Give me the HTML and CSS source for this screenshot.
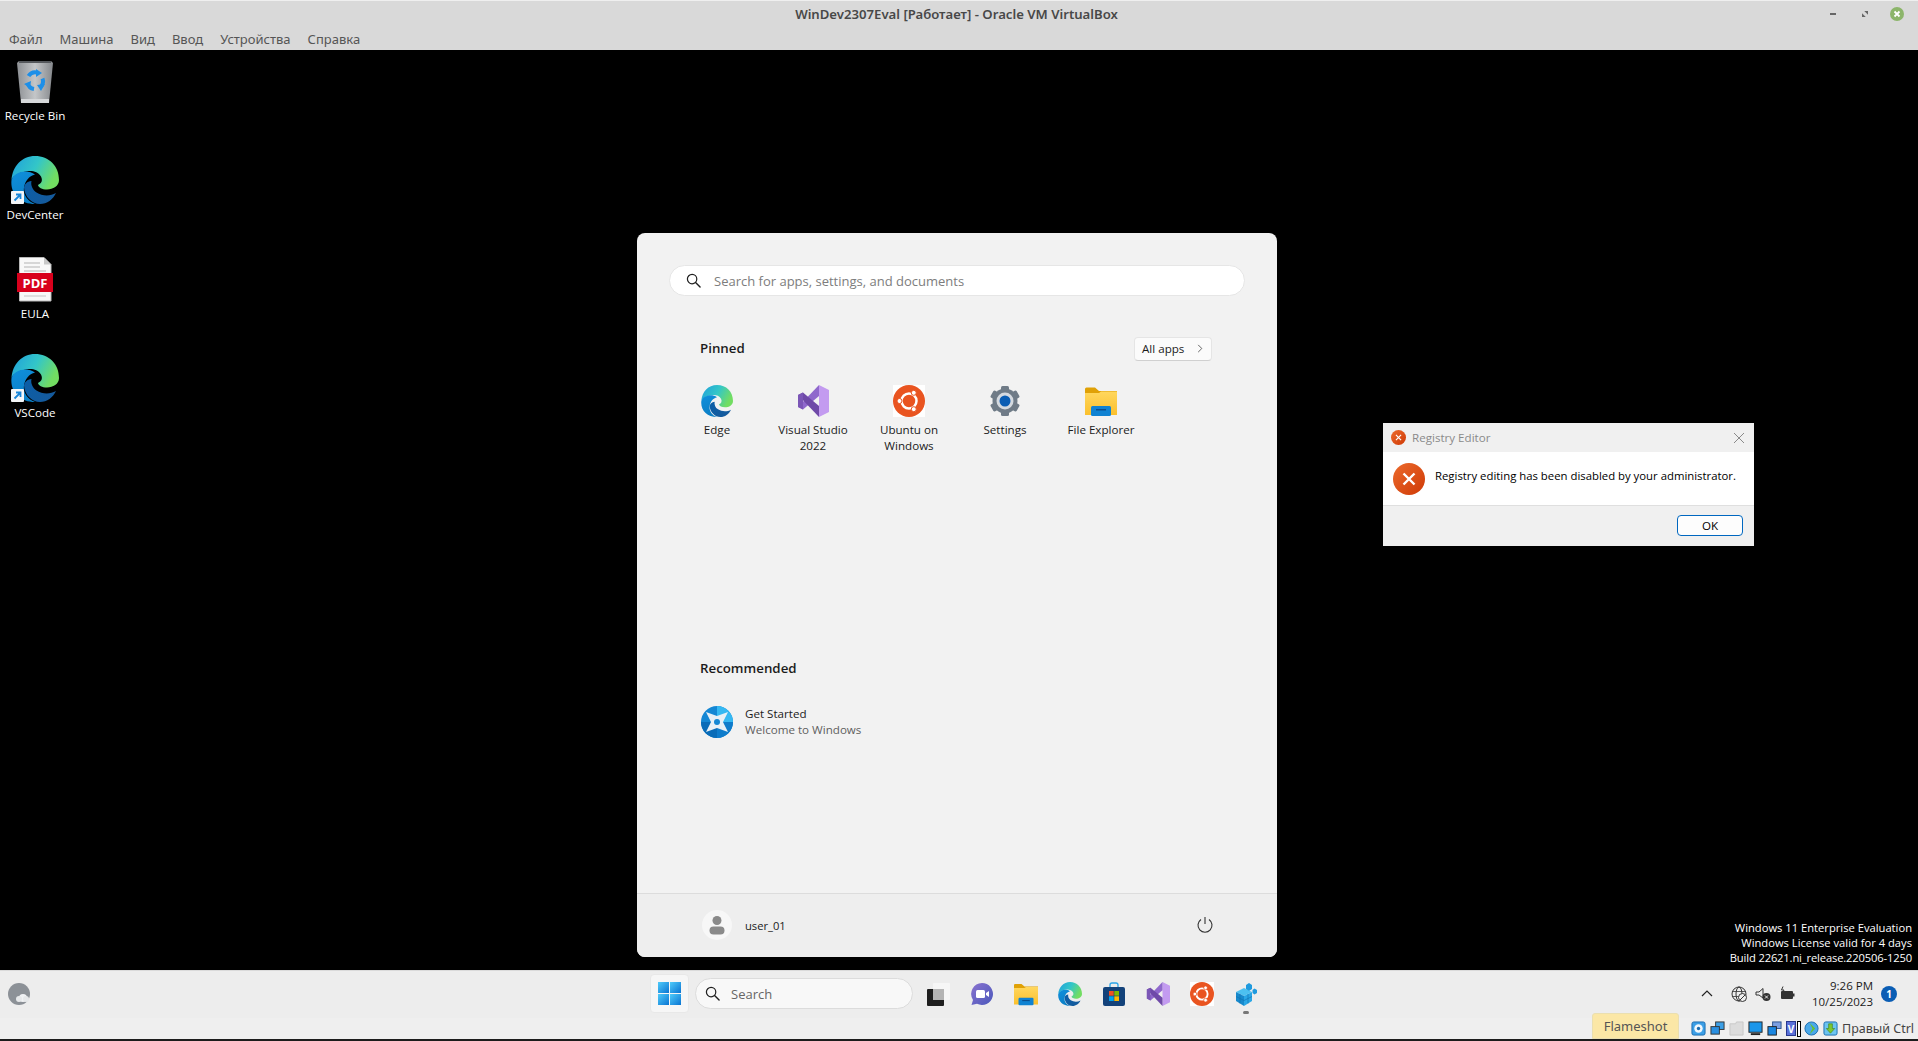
FILE: index.html
```html
<!DOCTYPE html>
<html lang="en">

<head>
    <meta charset="UTF-8">
    <meta name="viewport" content="width=device-width, initial-scale=1.0">
    <title>WinDev2307Eval - Oracle VM VirtualBox</title>
    <link rel="stylesheet" href="styles.css">
</head>

<body>
    <!-- shared icons -->
    <svg class="svgDefs" xmlns="http://www.w3.org/2000/svg">
        <defs>
            <linearGradient id="edgeTop" x1="0" y1="0" x2="1" y2="0.4">
                <stop offset="0" stop-color="#1f9fdc" />
                <stop offset="0.55" stop-color="#33c6c8" />
                <stop offset="1" stop-color="#72dd62" />
            </linearGradient>
            <linearGradient id="edgeLeft" x1="0" y1="0" x2="0.3" y2="1">
                <stop offset="0" stop-color="#0f8fdc" />
                <stop offset="1" stop-color="#0b7fc6" />
            </linearGradient>
            <linearGradient id="edgeHook" x1="0" y1="0" x2="1" y2="0.6">
                <stop offset="0" stop-color="#0a5ea8" />
                <stop offset="1" stop-color="#155a9c" />
            </linearGradient>
            <linearGradient id="binBody" x1="0" y1="0" x2="1" y2="0">
                <stop offset="0" stop-color="#8d9094" />
                <stop offset="0.5" stop-color="#c4c6c8" />
                <stop offset="1" stop-color="#85888c" />
            </linearGradient>
            <linearGradient id="winTile" x1="0" y1="0" x2="1" y2="1">
                <stop offset="0" stop-color="#4fcbfa" />
                <stop offset="1" stop-color="#0a74d2" />
            </linearGradient>
            <linearGradient id="errorRed" x1="0" y1="0" x2="1" y2="1">
                <stop offset="0" stop-color="#ec6a2c" />
                <stop offset="1" stop-color="#cf3a06" />
            </linearGradient>
            <linearGradient id="chatFill" x1="0" y1="0" x2="1" y2="1">
                <stop offset="0" stop-color="#8a72cf" />
                <stop offset="1" stop-color="#4a58bb" />
            </linearGradient>
            <linearGradient id="folderFill" x1="0" y1="0" x2="0" y2="1">
                <stop offset="0" stop-color="#ffd75e" />
                <stop offset="1" stop-color="#fbc02d" />
            </linearGradient>
            <symbol id="iconEdge" viewBox="0 0 48 48">
                <path fill="url(#edgeTop)" d="M0.5 24C1.5 10 11 0 24 0C38 0 48 10 48 24C48 30 42 33.5 36 33.5C31 33.5 27.5 31.5 27 29C30.5 27.5 32 24.5 30 20.5C27.5 16 22 14.5 17.500 15C9 16 2 19.500 0.5 24Z" />
                <path fill="url(#edgeLeft)" d="M0.5 24C-1 38 9 48 24 48C16 45 12 38.500 13 31.500C14 25 18 20 24 18.500C16 12.500 3 16 0.5 24Z" />
                <path fill="url(#edgeHook)" d="M13 31.500C13.500 41 21 48 29 48C36 48 42 43.500 45 37C39 40.500 31 40 25.500 36.500C21.500 34 19.500 29 20.500 25C16 25.500 13.500 28 13 31.500Z" />
            </symbol>
            <symbol id="iconShortcut" viewBox="0 0 13 13">
                <rect width="13" height="13" rx="1" fill="#f4f6f8" />
                <path d="M3.500 9.500L9 4M5 3.500H9.500V8" fill="none" stroke="#1a86d8" stroke-width="1.800" />
            </symbol>
            <symbol id="iconVs" viewBox="0 0 32 32">
                <polygon points="22,0 32,5 32,27 22,32" fill="#c39bf0" />
                <polygon points="22,0 22,11 6,24.500 1,22" fill="#8f68cc" />
                <polygon points="1,10 6,7.500 22,21 22,32" fill="#6f4aa8" />
                <polygon points="1,10 6,7.500 6,24.500 1,22" fill="#7b56b6" />
            </symbol>
            <symbol id="iconUbuntu" viewBox="0 0 32 32">
                <rect width="32" height="32" fill="#fff" />
                <circle cx="16" cy="16" r="16" fill="#e95420" />
                <circle cx="16" cy="16" r="7.500" fill="none" stroke="#fff" stroke-width="2.500" />
                <circle cx="6.500" cy="16" r="2.500" fill="#fff" stroke="#e95420" />
                <circle cx="20.750" cy="7.800" r="2.500" fill="#fff" stroke="#e95420" />
                <circle cx="20.750" cy="24.200" r="2.500" fill="#fff" stroke="#e95420" />
            </symbol>
            <symbol id="iconFolder" viewBox="0 0 32 32">
                <path fill="#e0a106" d="M0 4a1.500 1.500 0 0 1 1.500-1.500H10L14 6H32V12H0Z" />
                <path fill="url(#folderFill)" d="M0 8H14L16 6.500H32V30H0Z" />
                <rect x="6" y="21" width="20" height="10" rx="1.500" fill="#0f82d2" />
                <rect x="11" y="24" width="10" height="1.500" fill="#0a4f8f" />
            </symbol>
            <symbol id="iconSearch" viewBox="0 0 16 16">
                <circle cx="6.500" cy="6.500" r="5" fill="none" stroke="#1f1f1f" stroke-width="1.300" />
                <path d="M10.200 10.200L15 15" stroke="#1f1f1f" stroke-width="1.500" stroke-linecap="round" />
            </symbol>
            <symbol id="errorMark" viewBox="0 0 32 32">
                <circle cx="16" cy="16" r="16" fill="url(#errorRed)" />
                <path d="M10.500 10.500L21.500 21.500M21.500 10.500L10.500 21.500" stroke="#fff" stroke-width="2.400" />
            </symbol>
        </defs>
    </svg>

    <!-- VirtualBox window title and menu -->
    <header class="vmHeader">
        <div class="titleRow">
            <span class="vmTitle">WinDev2307Eval [Работает] - Oracle VM VirtualBox</span>
            <div class="windowButtons">
                <span class="btnMin"></span>
                <svg class="btnRestore" viewBox="0 0 8 8">
                    <polygon points="0,8 0,3 5,8" fill="#666" />
                    <polygon points="8,0 8,5 3,0" fill="#666" />
                </svg>
                <svg class="btnClose" viewBox="0 0 14 14">
                    <circle cx="7" cy="7" r="7" fill="#8cb56a" />
                    <path d="M4.500 4.500L9.500 9.500M9.500 4.500L4.500 9.500" stroke="#fff" stroke-width="1.800" />
                </svg>
            </div>
        </div>
        <nav class="menuRow">
            <span>Файл</span>
            <span>Машина</span>
            <span>Вид</span>
            <span>Ввод</span>
            <span>Устройства</span>
            <span>Справка</span>
        </nav>
    </header>

    <main class="desktop">
        <div class="desktopIcons">
            <div class="deskIcon">
                <svg class="deskGlyph" viewBox="0 0 48 48">
                    <polygon points="6,6 8,4 40,4 42,6 38,46 10,46" fill="url(#binBody)" />
                    <rect x="8" y="4" width="32" height="2" fill="#55585c" />
                    <rect x="10" y="42" width="28" height="4" fill="#d6d8da" />
                    <g fill="none" stroke="#1d8fe8" stroke-width="4">
                        <path d="M17.500 19A8 8 0 0 1 26 15.500" />
                        <path d="M31.500 21.500A8 8 0 0 1 29.500 30" />
                        <path d="M23 32A8 8 0 0 1 16.500 26" />
                    </g>
                    <g fill="#1d8fe8">
                        <polygon points="25,12 31,16 25,20" />
                        <polygon points="34,27 30,34 26,28" />
                        <polygon points="13,27 20,24 19,31" />
                    </g>
                </svg>
                <span class="deskLabel">Recycle Bin</span>
            </div>
            <div class="deskIcon">
                <div class="edgeShortcut">
                    <svg class="deskGlyph"><use href="#iconEdge" /></svg>
                    <svg class="shortcutBadge"><use href="#iconShortcut" /></svg>
                </div>
                <span class="deskLabel">DevCenter</span>
            </div>
            <div class="deskIcon">
                <svg class="deskGlyph" viewBox="0 0 48 48">
                    <path d="M8.500 2.500H33L40 9.500V46H8.500Z" fill="#f8f8f8" stroke="#b8b8b8" />
                    <path d="M33 2.500V9.500H40Z" fill="#c8c8c8" />
                    <path d="M13 8H29M13 12H29M13 16H35" stroke="#b4b4b4" />
                    <rect x="6" y="18" width="36" height="19" fill="#d8001c" />
                    <text class="pdfText" x="24" y="32.500" text-anchor="middle">PDF</text>
                    <path d="M13 41H35" stroke="#c4c4c4" />
                </svg>
                <span class="deskLabel">EULA</span>
            </div>
            <div class="deskIcon">
                <div class="edgeShortcut">
                    <svg class="deskGlyph"><use href="#iconEdge" /></svg>
                    <svg class="shortcutBadge"><use href="#iconShortcut" /></svg>
                </div>
                <span class="deskLabel">VSCode</span>
            </div>
        </div>

        <!-- Start menu -->
        <section class="startMenu">
            <div class="startMain">
                <div class="startSearch">
                    <svg class="startSearchIcon"><use href="#iconSearch" /></svg>
                    <span>Search for apps, settings, and documents</span>
                </div>
                <div class="pinned">
                    <div class="sectionHead">
                        <h2>Pinned</h2>
                        <span class="allApps">All apps
                            <svg class="chevron" viewBox="0 0 6 10">
                                <path d="M1 1L5 5L1 9" fill="none" stroke="#555" />
                            </svg>
                        </span>
                    </div>
                    <div class="appGrid">
                        <div class="app">
                            <svg class="appIcon"><use href="#iconEdge" /></svg>
                            <span>Edge</span>
                        </div>
                        <div class="app">
                            <svg class="appIcon"><use href="#iconVs" /></svg>
                            <span>Visual Studio 2022</span>
                        </div>
                        <div class="app">
                            <svg class="appIcon"><use href="#iconUbuntu" /></svg>
                            <span>Ubuntu on Windows</span>
                        </div>
                        <div class="app">
                            <svg class="appIcon" viewBox="0 0 32 32">
                                <g fill="#6f7b87">
                                    <circle cx="16" cy="16" r="12.500" />
                                    <rect x="12" y="1" width="8" height="30" rx="1.500" />
                                    <rect x="12" y="1" width="8" height="30" rx="1.500" transform="rotate(60 16 16)" />
                                    <rect x="12" y="1" width="8" height="30" rx="1.500" transform="rotate(120 16 16)" />
                                </g>
                                <circle cx="16" cy="16" r="8.500" fill="#d5dae0" />
                                <circle cx="16" cy="16" r="5.500" fill="#0a5db4" />
                            </svg>
                            <span>Settings</span>
                        </div>
                        <div class="app">
                            <svg class="appIcon"><use href="#iconFolder" /></svg>
                            <span>File Explorer</span>
                        </div>
                    </div>
                </div>
                <h2>Recommended</h2>
                <div class="recItem">
                    <svg class="appIcon" viewBox="0 0 32 32">
                        <circle cx="16" cy="16" r="16" fill="#1487d4" />
                        <path d="M16 0A16 16 0 0 1 32 16H16Z" fill="#35b8f2" />
                        <path d="M0 16H16V32A16 16 0 0 1 0 16Z" fill="#0a6cb8" />
                        <path d="M16 32V16H32A16 16 0 0 1 16 32Z" fill="#0f7ccb" />
                        <path d="M5 6L16 10L27 6L22 16L27 26L16 22L5 26L10 16Z" fill="#e8f0f6" />
                        <circle cx="16" cy="16" r="3" fill="#1487d4" />
                    </svg>
                    <div class="recText">
                        <span>Get Started</span>
                        <span class="recSub">Welcome to Windows</span>
                    </div>
                </div>
            </div>
            <div class="startFooter">
                <div class="userBox">
                    <svg class="avatar" viewBox="0 0 30 30">
                        <circle cx="15" cy="15" r="15" fill="#f7f7f7" />
                        <circle cx="15" cy="10.500" r="4.500" fill="#8a8a8a" />
                        <rect x="7.500" y="16.500" width="15" height="8" rx="4" fill="#8a8a8a" />
                    </svg>
                    <span>user_01</span>
                </div>
                <svg class="powerIcon" viewBox="0 0 18 18">
                    <path d="M5 3.500A7 7 0 1 0 13 3.500" fill="none" stroke="#333" stroke-width="1.100" />
                    <path d="M9 1V8" stroke="#333" stroke-width="1.100" />
                </svg>
            </div>
        </section>

        <!-- Registry Editor error dialog -->
        <section class="dialog">
            <div class="dialogTitle">
                <div class="dialogCaption">
                    <svg class="errorSmall"><use href="#errorMark" /></svg>
                    <span>Registry Editor</span>
                </div>
                <svg class="dialogClose" viewBox="0 0 10 10">
                    <path d="M0 0L10 10M10 0L0 10" stroke="#8a8a8a" />
                </svg>
            </div>
            <div class="dialogBody">
                <svg class="errorBig"><use href="#errorMark" /></svg>
                <span class="dialogText">Registry editing has been disabled by your administrator.</span>
            </div>
            <div class="dialogFooter">
                <span class="okButton">OK</span>
            </div>
        </section>

        <div class="watermark">
            <span>Windows 11 Enterprise Evaluation</span>
            <span>Windows License valid for 4 days</span>
            <span class="buildLine">Build 22621.ni_release.220506-1250</span>
        </div>
    </main>

    <!-- Windows taskbar -->
    <footer class="taskbar">
        <svg class="widgetIcon" viewBox="0 0 22 22">
            <circle cx="11" cy="11" r="11" fill="#8c9197" />
            <circle cx="15" cy="15" r="4" fill="#f0f2f4" />
            <circle cx="11" cy="16" r="3" fill="#e6e8ea" />
            <circle cx="18" cy="16" r="3" fill="#e6e8ea" />
        </svg>
        <div class="taskCenter">
            <div class="startButton">
                <svg class="winLogo" viewBox="0 0 23 23">
                    <rect width="11" height="11" fill="url(#winTile)" />
                    <rect x="12" width="11" height="11" fill="url(#winTile)" />
                    <rect y="12" width="11" height="11" fill="url(#winTile)" />
                    <rect x="12" y="12" width="11" height="11" fill="url(#winTile)" />
                </svg>
            </div>
            <div class="taskSearch">
                <svg class="taskSearchIcon"><use href="#iconSearch" /></svg>
                <span>Search</span>
            </div>
            <div class="taskApps">
                <span class="taskApp">
                    <svg viewBox="0 0 24 24">
                        <rect x="1" y="7" width="17" height="17" rx="1" fill="#1e1e1e" />
                        <rect x="7" y="1" width="17" height="17" rx="1" fill="#f6f6f6" />
                        <rect x="7" y="7" width="11" height="11" fill="#b4b4b4" />
                    </svg>
                </span>
                <span class="taskApp">
                    <svg viewBox="0 0 24 24">
                        <path d="M12 1a11 11 0 1 1-5 20.800L1.500 23L3 18A11 11 0 0 1 12 1Z" fill="url(#chatFill)" />
                        <rect x="6" y="8" width="9" height="8" rx="1.500" fill="#fff" />
                        <polygon points="16,11 19,9 19,15 16,13" fill="#fff" />
                    </svg>
                </span>
                <span class="taskApp"><svg><use href="#iconFolder" /></svg></span>
                <span class="taskApp"><svg><use href="#iconEdge" /></svg></span>
                <span class="taskApp">
                    <svg viewBox="0 0 24 24">
                        <path d="M8 5V3a2 2 0 0 1 2-2h4a2 2 0 0 1 2 2V5" fill="none" stroke="#2aa4e8" stroke-width="1.300" />
                        <rect x="1" y="5" width="22" height="19" rx="2" fill="#13427a" />
                        <rect x="7" y="9" width="4.700" height="4.700" fill="#f25022" />
                        <rect x="12.300" y="9" width="4.700" height="4.700" fill="#7fba00" />
                        <rect x="7" y="14.300" width="4.700" height="4.700" fill="#00a4ef" />
                        <rect x="12.300" y="14.300" width="4.700" height="4.700" fill="#ffb900" />
                    </svg>
                </span>
                <span class="taskApp"><svg><use href="#iconVs" /></svg></span>
                <span class="taskApp"><svg><use href="#iconUbuntu" /></svg></span>
                <span class="taskApp taskRunning">
                    <svg viewBox="0 0 24 24">
                        <polygon points="2,10 10,6 18,10 10,14" fill="#4cc0f0" />
                        <polygon points="2,10 10,14 10,24 2,19" fill="#1789cc" />
                        <polygon points="18,10 10,14 10,24 18,19" fill="#2aa7e6" />
                        <path d="M6 12V21.500M14 12V21.500M2 14.500L10 18.500L18 14.500" fill="none" stroke="#0d6fae" stroke-width="0.600" />
                        <polygon points="12,3 15,1 18,3 18,7 15,9 12,7" fill="#1f9ade" />
                        <polygon points="18.500,8 20.500,6.500 23,8 23,11 20.500,12.500 18.500,11" fill="#1f9ade" />
                    </svg>
                    <i class="runDot"></i>
                </span>
            </div>
        </div>
        <div class="tray">
            <svg class="trayChevron" viewBox="0 0 12 7">
                <path d="M1 6L6 1L11 6" fill="none" stroke="#222" stroke-width="1.200" />
            </svg>
            <svg class="trayIcon" viewBox="0 0 16 16">
                <circle cx="8" cy="8" r="7" fill="none" stroke="#333" />
                <ellipse cx="8" cy="8" rx="3" ry="7" fill="none" stroke="#333" />
                <path d="M1 5.500H15M1 10.500H15" stroke="#333" stroke-width="0.800" />
                <circle cx="11.500" cy="11.500" r="4" fill="#eee" stroke="#333" />
                <path d="M9 14L14 9" stroke="#333" />
            </svg>
            <svg class="trayIcon" viewBox="0 0 16 16">
                <path d="M1 6H4L8 2.500V12L4 9H1Z" fill="none" stroke="#333" />
                <circle cx="11.500" cy="11" r="4" fill="#333" />
                <path d="M10 9.500L13 12.500M13 9.500L10 12.500" stroke="#eee" />
            </svg>
            <svg class="trayIcon" viewBox="0 0 16 16">
                <rect x="2" y="5" width="12" height="8" rx="1" fill="#333" />
                <rect x="14" y="7.500" width="1.500" height="3" fill="#333" />
                <path d="M4 0.500L2.500 4H5L3.500 7" fill="none" stroke="#333" />
            </svg>
            <div class="clock">
                <span>9:26 PM</span>
                <span>10/25/2023</span>
            </div>
            <span class="notifyBadge">1</span>
        </div>
    </footer>

    <!-- VirtualBox status bar -->
    <div class="statusBar">
        <span class="flameshot">Flameshot</span>
        <svg class="vmIcon" viewBox="0 0 16 16">
            <rect x="1" y="1" width="14" height="14" rx="2" fill="#3c9fe6" stroke="#1a6cb0" />
            <circle cx="8" cy="8" r="4.500" fill="#f2f8fc" />
            <circle cx="8" cy="8" r="1.800" fill="#1a6cb0" />
        </svg>
        <svg class="vmIcon" viewBox="0 0 16 16">
            <rect x="6" y="1" width="9" height="8" fill="#3c9fe6" stroke="#333" />
            <rect x="1" y="6" width="9" height="8" fill="#2a8fe0" stroke="#333" />
        </svg>
        <svg class="vmIcon" viewBox="0 0 16 16">
            <path d="M1 15V3H7L8 1H15V15Z" fill="#dcdcdc" stroke="#c8c8c8" />
        </svg>
        <svg class="vmIcon" viewBox="0 0 16 16">
            <rect x="1" y="1" width="14" height="11" fill="#1a96ea" stroke="#222" />
            <path d="M3 14H13" stroke="#222" stroke-width="2" />
        </svg>
        <svg class="vmIcon" viewBox="0 0 16 16">
            <rect x="6" y="1" width="9" height="7" fill="#7c9fe0" stroke="#28508c" />
            <rect x="1" y="6" width="9" height="9" fill="#1a86e0" stroke="#222" />
        </svg>
        <span class="vmV">V</span>
        <span class="vmBar"></span>
        <svg class="vmIcon" viewBox="0 0 16 16">
            <circle cx="8" cy="8" r="7" fill="#4aa8e8" stroke="#1a6cb0" />
            <path d="M6 2L12 8L6 14L9 8Z" fill="#68c030" />
        </svg>
        <svg class="vmIcon" viewBox="0 0 16 16">
            <rect x="1" y="1" width="14" height="14" rx="2" fill="#6cc4f0" stroke="#1a6cb0" />
            <path d="M8 13L3.500 8H6V3H10V8H12.500Z" fill="#7cc830" stroke="#3a7a10" stroke-width="0.600" />
        </svg>
        <span class="hostKey">Правый Ctrl</span>
    </div>
</body>

</html>
```
FILE: styles.css
```css
* {
    box-sizing: border-box;
}

.svgDefs {
    display: block;
    width: 0;
    height: 0;
    overflow: hidden;
}

body {
    margin: 0;
    height: 100vh;
    overflow: hidden;
    display: flex;
    flex-direction: column;
    background: #1c1c1c;
    font-family: "Open Sans", "Noto Sans", sans-serif;
    font-size: 11.6px;
    color: #1b1b1b;
}

/* VirtualBox header */
.vmHeader {
    height: 50px;
    background: #d9d9d9;
    border-top: 1px solid #efefef;
    color: #4a4a4a;
}

.titleRow {
    height: 26px;
    display: flex;
    align-items: center;
    justify-content: center;
    padding-right: 5px;
    position: relative;
}

.vmTitle {
    font-family: "Noto Sans", sans-serif;
    font-size: 13.15px;
    font-weight: 600;
    color: #484848;
}

.windowButtons {
    position: absolute;
    top: 6px;
    right: 14px;
    display: flex;
    align-items: center;
    gap: 22px;
}

.btnMin {
    width: 6px;
    height: 2px;
    margin-right: 4px;
    background: #666;
}

.btnRestore {
    width: 6px;
    height: 6px;
}

.btnClose {
    width: 14px;
    height: 14px;
}

.menuRow {
    height: 23px;
    display: flex;
    align-items: center;
    gap: 17px;
    padding-left: 9px;
    font-family: "Noto Sans", sans-serif;
    font-size: 13px;
    color: #555;
}

/* desktop */
.desktop {
    flex: 1;
    position: relative;
    background: #000;
}

.desktopIcons {
    display: grid;
    grid-auto-rows: 99px;
    width: 70px;
    padding-top: 7px;
}

.deskIcon {
    display: flex;
    flex-direction: column;
    align-items: center;
}

.deskGlyph {
    display: block;
    width: 48px;
    height: 48px;
}

.deskLabel {
    margin-top: 3px;
    color: #fff;
    line-height: 16px;
    white-space: nowrap;
}

.edgeShortcut {
    position: relative;
    width: 48px;
    height: 48px;
}

.shortcutBadge {
    position: absolute;
    left: 0;
    bottom: 0;
    width: 13px;
    height: 13px;
}

.pdfText {
    font-family: "Open Sans", sans-serif;
    font-size: 13px;
    font-weight: 700;
    fill: #fff;
}

/* start menu */
.startMenu {
    position: absolute;
    left: 637px;
    top: 183px;
    width: 640px;
    height: 724px;
    display: flex;
    flex-direction: column;
    background: #f2f2f2;
    border-radius: 8px;
    overflow: hidden;
}

.startMain {
    flex: 1;
    padding: 32px 65px 0 63px;
}

.startSearch {
    height: 31px;
    width: 576px;
    margin-left: -31px;
    display: flex;
    align-items: center;
    gap: 13px;
    padding: 1px 0 0 16px;
    background: #fff;
    border: 1px solid #e6e6e6;
    border-radius: 16px;
    color: #7d7d7d;
    font-size: 13px;
}

.startSearchIcon {
    width: 15px;
    height: 15px;
    margin-top: -1px;
}

.pinned {
    height: 321px;
    margin-top: 41px;
}

.sectionHead {
    display: flex;
    align-items: center;
    justify-content: space-between;
    height: 24px;
}

.sectionHead h2 {
    margin-top: -2px;
}

h2 {
    margin: 0;
    font-size: 13.3px;
    line-height: 20px;
    font-weight: 600;
    color: #1c1c1c;
}

.allApps {
    display: flex;
    align-items: center;
    justify-content: space-between;
    width: 78px;
    height: 24px;
    padding: 0 8px 1px 7px;
    background: #fbfbfb;
    border: 1px solid #e5e5e5;
    border-bottom-color: #d0d0d0;
    border-radius: 4px;
}

.chevron {
    width: 6px;
    height: 9px;
}

.appGrid {
    display: flex;
    margin: 24px 0 0 -31px;
}

.app {
    width: 96px;
    display: flex;
    flex-direction: column;
    align-items: center;
    gap: 5px;
    text-align: center;
    line-height: 16px;
    padding: 0 8px;
}

.appIcon {
    display: block;
    flex: none;
    width: 32px;
    height: 32px;
}

.recItem {
    display: flex;
    align-items: center;
    gap: 12px;
    margin-top: 27px;
    padding-left: 1px;
}

.recText {
    display: flex;
    flex-direction: column;
    padding-top: 1px;
    line-height: 16px;
}

.recSub {
    color: #5f5f5f;
}

.startFooter {
    height: 64px;
    display: flex;
    align-items: center;
    justify-content: space-between;
    padding: 0 63px 1px 65px;
    background: #eeeeee;
    border-top: 1px solid #dcdcdc;
}

.userBox {
    display: flex;
    align-items: center;
    gap: 13px;
    font-size: 11.2px;
}

.avatar {
    width: 30px;
    height: 30px;
}

.powerIcon {
    width: 18px;
    height: 18px;
}

/* error dialog */
.dialog {
    position: absolute;
    left: 1383px;
    top: 373px;
    width: 371px;
    height: 123px;
    display: flex;
    flex-direction: column;
    background: #fff;
}

.dialogTitle {
    height: 29px;
    flex: none;
    display: flex;
    align-items: center;
    justify-content: space-between;
    padding: 0 10px 0 8px;
    background: #f0f0f0;
    color: #8a8a8a;
}

.dialogCaption {
    display: flex;
    align-items: center;
    gap: 6px;
}

.errorSmall {
    width: 15px;
    height: 15px;
}

.dialogClose {
    width: 10px;
    height: 10px;
}

.dialogBody {
    height: 53px;
    flex: none;
    display: flex;
    align-items: center;
    gap: 10px;
    padding-left: 10px;
    color: #000;
    font-size: 11.35px;
}

.dialogText {
    margin-bottom: 7px;
}

.errorBig {
    width: 32px;
    height: 32px;
}

.dialogFooter {
    flex: 1;
    display: flex;
    align-items: center;
    justify-content: flex-end;
    padding: 0 11px 2px 0;
    background: #f0f0f0;
    border-top: 1px solid #dfdfdf;
}

.okButton {
    width: 66px;
    height: 21px;
    display: flex;
    align-items: center;
    justify-content: center;
    background: #fdfdfd;
    border: 1px solid #0067c0;
    border-radius: 4px;
    color: #000;
}

.watermark {
    position: absolute;
    right: 6px;
    bottom: 5px;
    display: flex;
    flex-direction: column;
    align-items: flex-end;
    color: #fff;
    line-height: 15px;
    font-size: 11.2px;
}

.buildLine {
    letter-spacing: -0.15px;
}

/* taskbar */
.taskbar {
    height: 48px;
    flex: none;
    display: flex;
    align-items: center;
    padding: 0 0 2px 8px;
    background: #ededed;
    border-top: 1px solid #dadada;
}

.widgetIcon {
    width: 22px;
    height: 22px;
}

.taskCenter {
    display: flex;
    align-items: center;
    margin-left: 620px;
}

.startButton {
    width: 39px;
    height: 39px;
    display: flex;
    align-items: center;
    justify-content: center;
    background: #f6f6f6;
    border: 1px solid #e8e8e8;
    border-radius: 4px;
}

.winLogo {
    width: 23px;
    height: 23px;
}

.taskSearch {
    width: 218px;
    height: 31px;
    margin-left: 6px;
    display: flex;
    align-items: center;
    gap: 11px;
    padding-left: 9px;
    background: #f8f8f8;
    border: 1px solid #dcdcdc;
    border-radius: 16px;
    color: #666;
    font-size: 13px;
}

.taskSearchIcon {
    width: 15px;
    height: 15px;
}

.taskApps {
    display: flex;
    margin-left: 3px;
}

.taskApp {
    position: relative;
    width: 44px;
    height: 40px;
    display: flex;
    align-items: center;
    justify-content: center;
}

.taskApp svg {
    width: 24px;
    height: 24px;
}

.runDot {
    position: absolute;
    left: 19px;
    bottom: 0;
    width: 6px;
    height: 3px;
    border-radius: 2px;
    background: #777;
}

.tray {
    display: flex;
    align-items: center;
    margin-left: auto;
    padding-right: 21px;
}

.trayChevron {
    width: 12px;
    height: 7px;
    margin-right: 18px;
}

.trayIcon {
    width: 16px;
    height: 16px;
    margin-right: 8px;
}

.clock {
    width: 70px;
    display: flex;
    flex-direction: column;
    align-items: flex-end;
    line-height: 15.5px;
    font-size: 11.5px;
    white-space: nowrap;
}

.notifyBadge {
    width: 16px;
    height: 16px;
    margin-left: 8px;
    display: flex;
    align-items: center;
    justify-content: center;
    border-radius: 50%;
    background: #0a5db4;
    color: #fff;
    font-size: 10px;
    font-weight: 700;
}

/* VirtualBox status bar */
.statusBar {
    height: 23px;
    flex: none;
    position: relative;
    display: flex;
    align-items: center;
    justify-content: flex-end;
    padding-right: 4px;
    background: #efefef;
    border-bottom: 2px solid #1c1c1c;
}

.flameshot {
    position: absolute;
    left: 1592px;
    bottom: 0;
    width: 87px;
    height: 26px;
    display: flex;
    align-items: center;
    justify-content: center;
    background: #fbe7a6;
    border: 1px solid #eadfb0;
    border-radius: 3px 3px 0 0;
    color: #555;
    font-family: "Noto Sans", sans-serif;
    font-size: 13px;
}

.vmIcon {
    width: 15px;
    height: 15px;
    margin-right: 4px;
}

.vmV {
    width: 10px;
    height: 15px;
    margin-right: 1px;
    display: flex;
    align-items: center;
    justify-content: center;
    background: #5a70d8;
    border: 1px solid #2a3a90;
    color: #fff;
    font-size: 10px;
    font-weight: 700;
}

.vmBar {
    width: 4px;
    height: 16px;
    margin-right: 3px;
    background: #fff;
    border: 1px solid #000;
}

.hostKey {
    width: 72px;
    white-space: nowrap;
    color: #444;
    font-family: "Noto Sans", sans-serif;
    font-size: 12.5px;
}
```
